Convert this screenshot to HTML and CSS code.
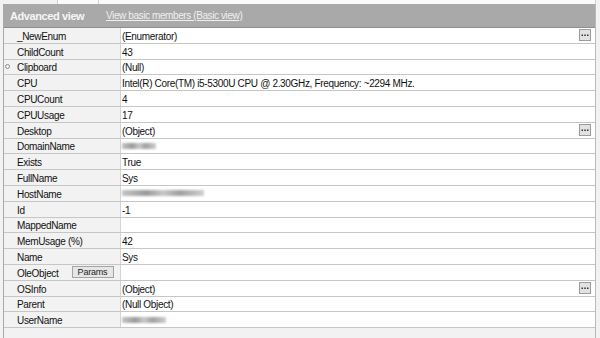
FILE: index.html
```html
<!DOCTYPE html>
<html>
<head>
<meta charset="utf-8">
<link rel="stylesheet" href="styles.css">
</head>
<body>
<div class="topstrip"><span class="tab1"></span><span class="tab2"></span><span class="tab3"></span></div>
<div class="panel">
  <div class="header">
    <span class="title">Advanced view</span>
    <a class="link">View basic members (Basic view)</a>
  </div>
  <div class="rows">
    <div class="row"><div class="mark"></div><div class="name">_NewEnum</div><div class="value">(Enumerator)<span class="dots"><svg width="10" height="10" viewBox="0 0 10 10"><rect x="1.5" y="4.5" width="1.5" height="1.5" fill="#333"/><rect x="4.3" y="4.5" width="1.5" height="1.5" fill="#333"/><rect x="7" y="4.5" width="1.5" height="1.5" fill="#333"/></svg></span></div></div>
    <div class="row"><div class="mark"></div><div class="name">ChildCount</div><div class="value">43</div></div>
    <div class="row"><div class="mark"><span class="circle"></span></div><div class="name">Clipboard</div><div class="value">(Null)</div></div>
    <div class="row"><div class="mark"></div><div class="name">CPU</div><div class="value">Intel(R) Core(TM) i5-5300U CPU @ 2.30GHz, Frequency: ~2294 MHz.</div></div>
    <div class="row"><div class="mark"></div><div class="name">CPUCount</div><div class="value">4</div></div>
    <div class="row"><div class="mark"></div><div class="name">CPUUsage</div><div class="value">17</div></div>
    <div class="row"><div class="mark"></div><div class="name">Desktop</div><div class="value">(Object)<span class="dots"><svg width="10" height="10" viewBox="0 0 10 10"><rect x="1.5" y="4.5" width="1.5" height="1.5" fill="#333"/><rect x="4.3" y="4.5" width="1.5" height="1.5" fill="#333"/><rect x="7" y="4.5" width="1.5" height="1.5" fill="#333"/></svg></span></div></div>
    <div class="row"><div class="mark"></div><div class="name">DomainName</div><div class="value"><span class="blur" style="width:34px"></span></div></div>
    <div class="row"><div class="mark"></div><div class="name">Exists</div><div class="value">True</div></div>
    <div class="row"><div class="mark"></div><div class="name">FullName</div><div class="value">Sys</div></div>
    <div class="row"><div class="mark"></div><div class="name">HostName</div><div class="value"><span class="blur" style="width:82px"></span></div></div>
    <div class="row"><div class="mark"></div><div class="name">Id</div><div class="value">-1</div></div>
    <div class="row"><div class="mark"></div><div class="name">MappedName</div><div class="value"></div></div>
    <div class="row"><div class="mark"></div><div class="name">MemUsage (%)</div><div class="value">42</div></div>
    <div class="row"><div class="mark"></div><div class="name">Name</div><div class="value">Sys</div></div>
    <div class="row"><div class="mark"></div><div class="name">OleObject<span class="params">Params</span></div><div class="value"></div></div>
    <div class="row"><div class="mark"></div><div class="name">OSInfo</div><div class="value">(Object)<span class="dots"><svg width="10" height="10" viewBox="0 0 10 10"><rect x="1.5" y="4.5" width="1.5" height="1.5" fill="#333"/><rect x="4.3" y="4.5" width="1.5" height="1.5" fill="#333"/><rect x="7" y="4.5" width="1.5" height="1.5" fill="#333"/></svg></span></div></div>
    <div class="row"><div class="mark"></div><div class="name">Parent</div><div class="value">(Null Object)</div></div>
    <div class="row"><div class="mark"></div><div class="name">UserName</div><div class="value"><span class="blur" style="width:44px"></span></div></div>
  </div>
</div>
</body>
</html>
```
FILE: styles.css
```css
html, body {
  margin: 0;
  padding: 0;
}
body {
  width: 600px;
  height: 338px;
  overflow: hidden;
  background: #f2f2f2;
  font-family: "Liberation Sans", Arial, sans-serif;
  font-size: 10px;
  letter-spacing: -0.33px;
  color: #111111;
}
.topstrip {
  height: 4px;
  display: flex;
}
.tab1 {
  width: 57px;
  background: #f2f2f2;
  border-right: 1px solid #d0d0d0;
}
.tab2 {
  width: 40px;
  background: #fafafa;
  border-right: 1px solid #d0d0d0;
}
.tab3 {
  width: 496px;
  background: #fafafa;
  border-right: 1px solid #d0d0d0;
}
.panel {
  margin-left: 3px;
  width: 591px;
  height: 334px;
  border-left: 1px solid #a8a8a8;
  border-right: 1px solid #b8b8b8;
  background: #f2f2f2;
}
.header {
  height: 23px;
  background: #a9a9a9;
  border-bottom: 1px solid #8e8e8e;
  display: flex;
  align-items: center;
  padding-left: 6px;
}
.title {
  font-weight: bold;
  font-size: 11px;
  letter-spacing: -0.4px;
  color: #f6f6f6;
  width: 96px;
}
.link {
  color: #f0f0f0;
  text-decoration: underline;
  font-size: 10px;
  letter-spacing: -0.4px;
}
.rows {
  display: flex;
  flex-direction: column;
}
.row {
  height: 14.8px;
  border-bottom: 1px solid #c6c6c6;
  display: grid;
  grid-template-columns: 13px 104px 1fr;
}
.mark {
  background: #f2f2f2;
  display: flex;
  align-items: center;
  padding-left: 1px;
}
.circle {
  width: 3px;
  height: 3px;
  border: 1px solid #8a8a8a;
  border-radius: 50%;
}
.name {
  background: #f2f2f2;
  border-right: 1px solid #d4d4d4;
  display: flex;
  align-items: center;
  white-space: nowrap;
  padding-top: 2px;
  box-sizing: border-box;
}
.value {
  background: #ffffff;
  padding-left: 1px;
  padding-top: 2px;
  box-sizing: border-box;
  display: flex;
  align-items: center;
  white-space: nowrap;
}
.dots {
  margin-left: auto;
  margin-right: 4px;
  margin-top: -2px;
  width: 10px;
  height: 10px;
  border: 1px solid #9c9c9c;
  background: #e2e2e2;
  display: flex;
}
.params {
  margin-left: 13px;
  margin-top: -2px;
  width: 40px;
  height: 10px;
  border: 1px solid #a4a4a4;
  background: #e6e6e6;
  font-size: 9px;
  line-height: 10px;
  letter-spacing: -0.2px;
  text-align: center;
  color: #222;
}
.blur {
  display: inline-block;
  height: 6px;
  margin-top: -2px;
  background: linear-gradient(90deg, #c4c4c4, #9a9a9a 30%, #c8c8c8 50%, #a0a0a0 70%, #d0d0d0);
  filter: blur(1.2px);
}
```
